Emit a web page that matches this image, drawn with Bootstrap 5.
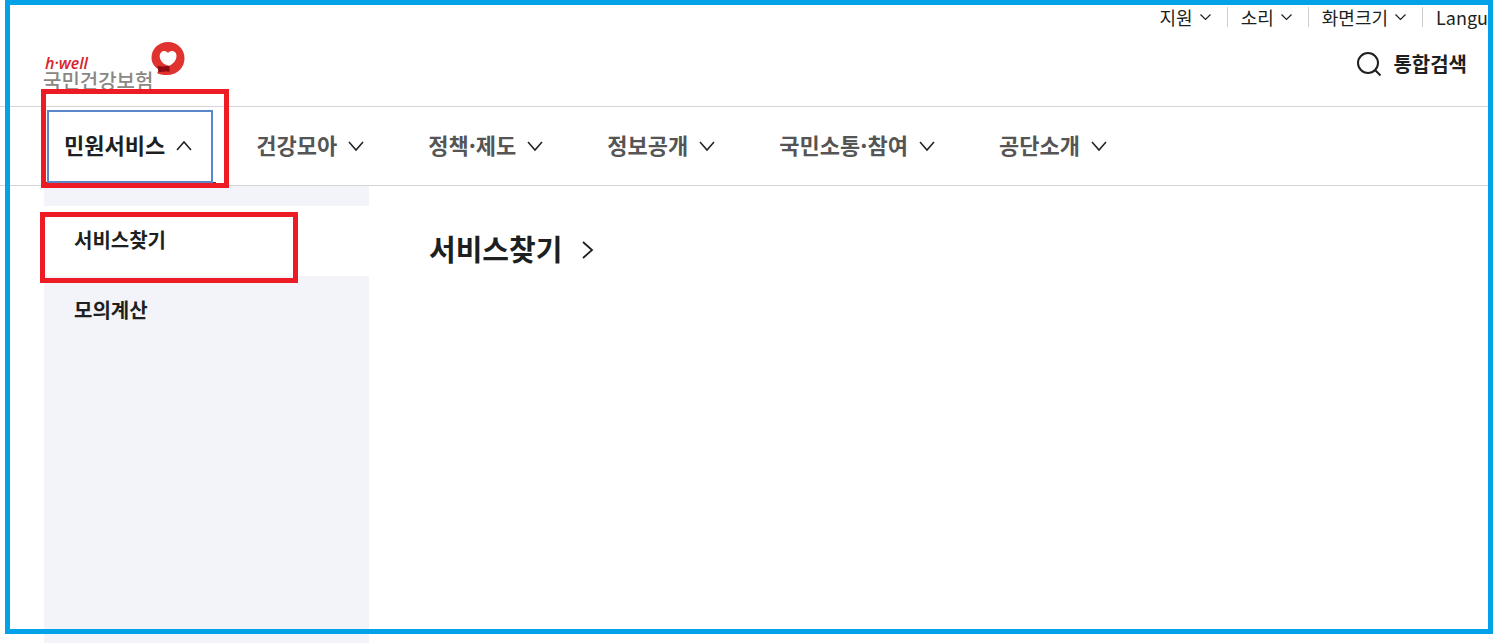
<!DOCTYPE html>
<html lang="ko">
<head>
<meta charset="utf-8">
<meta name="viewport" content="width=device-width, initial-scale=1">
<title>국민건강보험</title>
<link href="https://cdn.jsdelivr.net/npm/bootstrap@5.3.0/dist/css/bootstrap.min.css" rel="stylesheet">
<style>
  body { font-family: "Noto Sans CJK KR", "Noto Sans", sans-serif; color: #1d1f21; background: #fff; }
  a { color: inherit; text-decoration: none; }
  svg { flex: none; display: block; }
  .stroke { fill: none; stroke: currentColor; }

  /* annotation outlines laid over the page */
  .page-frame { position: absolute; inset: 0 0 9px 5px; border: 5px solid #00a2e8; z-index: 3; pointer-events: none; }
  .callout { position: absolute; border: 5px solid #ed1c24; z-index: 4; pointer-events: none; }
  .callout-menu { inset: -18px -13px -3px -3px; }
  .callout-side { inset: 6px 71px -7px -4px; }

  .site-header { padding-right: 5px; }
  .util-row { height: 34px; font-size: 18px; line-height: 24px; }
  .util-row .btn { font-size: 18px; line-height: 24px; color: inherit; gap: 6px; }
  .util-row li + li { border-left: 1px solid #ccc; padding-left: 13px; margin-left: 14px; height: 20px; }
  .brand-row { height: 72px; padding: 0 21px 0 43px; }
  .site-logo { height: 56px; }
  .logo-words { padding-top: 12px; width: 108px; white-space: nowrap; }
  .logo-latin { font: italic 600 16px/18px "Open Sans", sans-serif; color: #d8232a; padding-left: 2px; }
  .logo-name { font-size: 20px; line-height: 18px; font-weight: 500; color: #8b8782; }
  .search-btn { font-size: 20px; line-height: 28px; font-weight: 700; color: inherit; gap: 11px; }

  .main-menu { border-top: 1px solid #d5d5d8; border-bottom: 1px solid #d5d5d8; padding-left: 44px; margin-right: 5px; }
  .main-menu ul { column-gap: 20px; }
  .menu-btn { height: 78px; padding: 0 22px 4px 20px; border: 0; border-radius: 0; font-size: 22px; font-weight: 700; color: #555; gap: 9px; }
  .menu-btn svg { color: #1d1f21; margin-top: 4px; }
  .menu-btn.is-open { color: #1d1f21; border-bottom: 3px solid #a8121f; padding-top: 3px; }
  .menu-btn.is-open::after { content: ""; position: absolute; inset: 3px 3px 2px; border: 2px solid #5b86c9; }

  .side-menu { width: 325px; background: #f3f4fa; padding-top: 20px; margin-left: 44px; }
  .side-menu a { display: block; height: 70px; padding: 19px 30px; font-size: 20px; line-height: 30px; font-weight: 700; }
  .side-menu .current { background: #fff; }
  .panel-title { font-size: 29px; line-height: 44px; font-weight: 700; padding: 40px 0 0 60px; }
  .panel-title svg { margin-top: 4px; }
</style>
</head>
<body>
<div class="position-relative min-vh-100 d-flex flex-column overflow-hidden">
  <header class="site-header">
    <ul class="util-row list-unstyled d-flex justify-content-end align-items-center m-0">
      <li class="d-flex align-items-center"><button class="btn p-0 border-0 d-flex align-items-center" type="button">지원 <svg width="14" height="14" viewBox="0 0 14 14"><path class="stroke" stroke-width="1.2" d="M1.500 4.500 6.500 9.500l5-5"/></svg></button></li>
      <li class="d-flex align-items-center"><button class="btn p-0 border-0 d-flex align-items-center" type="button">소리 <svg width="14" height="14" viewBox="0 0 14 14"><path class="stroke" stroke-width="1.2" d="M1.500 4.500 6.500 9.500l5-5"/></svg></button></li>
      <li class="d-flex align-items-center"><button class="btn p-0 border-0 d-flex align-items-center" type="button">화면크기 <svg width="14" height="14" viewBox="0 0 14 14"><path class="stroke" stroke-width="1.2" d="M1.500 4.500 6.500 9.500l5-5"/></svg></button></li>
      <li class="d-flex align-items-center"><button class="btn p-0 border-0" type="button">Langu</button></li>
    </ul>
    <div class="brand-row d-flex justify-content-between">
      <a href="#" class="site-logo d-flex mt-2">
        <span class="logo-words d-flex flex-column">
          <span class="logo-latin">h·well</span>
          <span class="logo-name">국민건강보험</span>
        </span>
        <svg width="34" height="34" viewBox="0 0 34 34" aria-hidden="true">
          <path fill="#e0322f" d="M17 0C26.500 0 33.500 7 33.500 16.200 33.500 26 26 33 16 33c-4 0-7.500-.6-10-2 1-.8 1.600-2 1.600-3.500C3 24.500.5 20.500.5 15.800.5 7 7.500 0 17 0z"/>
          <path fill="#8f0b12" d="M6.500 24c4 .8 8 .6 12-.7v6.500c-4-.4-7.500-.2-11 .4z"/>
          <path fill="#fff" d="M17 11c2-3.200 8.500-2.800 8.500 2.800 0 5-3.500 8-7 10-4-.2-9.500-3.800-9.800-9C8.400 8.500 15 7.500 17 11z"/>
        </svg>
      </a>
      <button class="search-btn btn p-0 border-0 d-flex align-items-center align-self-start mt-3" type="button">
        <svg width="26" height="26" viewBox="0 0 26 26"><circle class="stroke" stroke-width="2" cx="12" cy="12" r="10"/><path class="stroke" stroke-width="2" d="m19 19 5.500 5.500"/></svg>
        통합검색
      </button>
    </div>
  </header>

  <nav class="main-menu">
    <ul class="list-unstyled d-flex m-0">
      <li class="position-relative"><button class="menu-btn is-open btn d-flex align-items-center" type="button" aria-expanded="true">민원서비스 <svg width="20" height="20" viewBox="0 0 20 20"><path class="stroke" stroke-width="1.500" d="m3 14 7-8 7 8"/></svg></button><span class="callout callout-menu"></span></li>
      <li><button class="menu-btn btn d-flex align-items-center" type="button">건강모아 <svg width="20" height="20" viewBox="0 0 20 20"><path class="stroke" stroke-width="1.500" d="m3 6 7 8 7-8"/></svg></button></li>
      <li><button class="menu-btn btn d-flex align-items-center" type="button">정책·제도 <svg width="20" height="20" viewBox="0 0 20 20"><path class="stroke" stroke-width="1.500" d="m3 6 7 8 7-8"/></svg></button></li>
      <li><button class="menu-btn btn d-flex align-items-center" type="button">정보공개 <svg width="20" height="20" viewBox="0 0 20 20"><path class="stroke" stroke-width="1.500" d="m3 6 7 8 7-8"/></svg></button></li>
      <li><button class="menu-btn btn d-flex align-items-center" type="button">국민소통·참여 <svg width="20" height="20" viewBox="0 0 20 20"><path class="stroke" stroke-width="1.500" d="m3 6 7 8 7-8"/></svg></button></li>
      <li><button class="menu-btn btn d-flex align-items-center" type="button">공단소개 <svg width="20" height="20" viewBox="0 0 20 20"><path class="stroke" stroke-width="1.500" d="m3 6 7 8 7-8"/></svg></button></li>
    </ul>
  </nav>

  <main class="d-flex flex-grow-1">
    <ul class="side-menu list-unstyled flex-shrink-0 mb-0">
      <li class="position-relative"><a href="#" class="current">서비스찾기</a><span class="callout callout-side"></span></li>
      <li><a href="#">모의계산</a></li>
    </ul>
    <section class="flex-grow-1">
      <h2 class="panel-title m-0"><a href="#" class="d-inline-flex align-items-center gap-3">서비스찾기 <svg width="20" height="20" viewBox="0 0 20 20"><path class="stroke" stroke-width="1.800" d="m5 2 9 8-9 8"/></svg></a></h2>
    </section>
  </main>

  <div class="page-frame"></div>
</div>
<script src="https://cdn.jsdelivr.net/npm/bootstrap@5.3.0/dist/js/bootstrap.bundle.min.js"></script>
</body>
</html>
